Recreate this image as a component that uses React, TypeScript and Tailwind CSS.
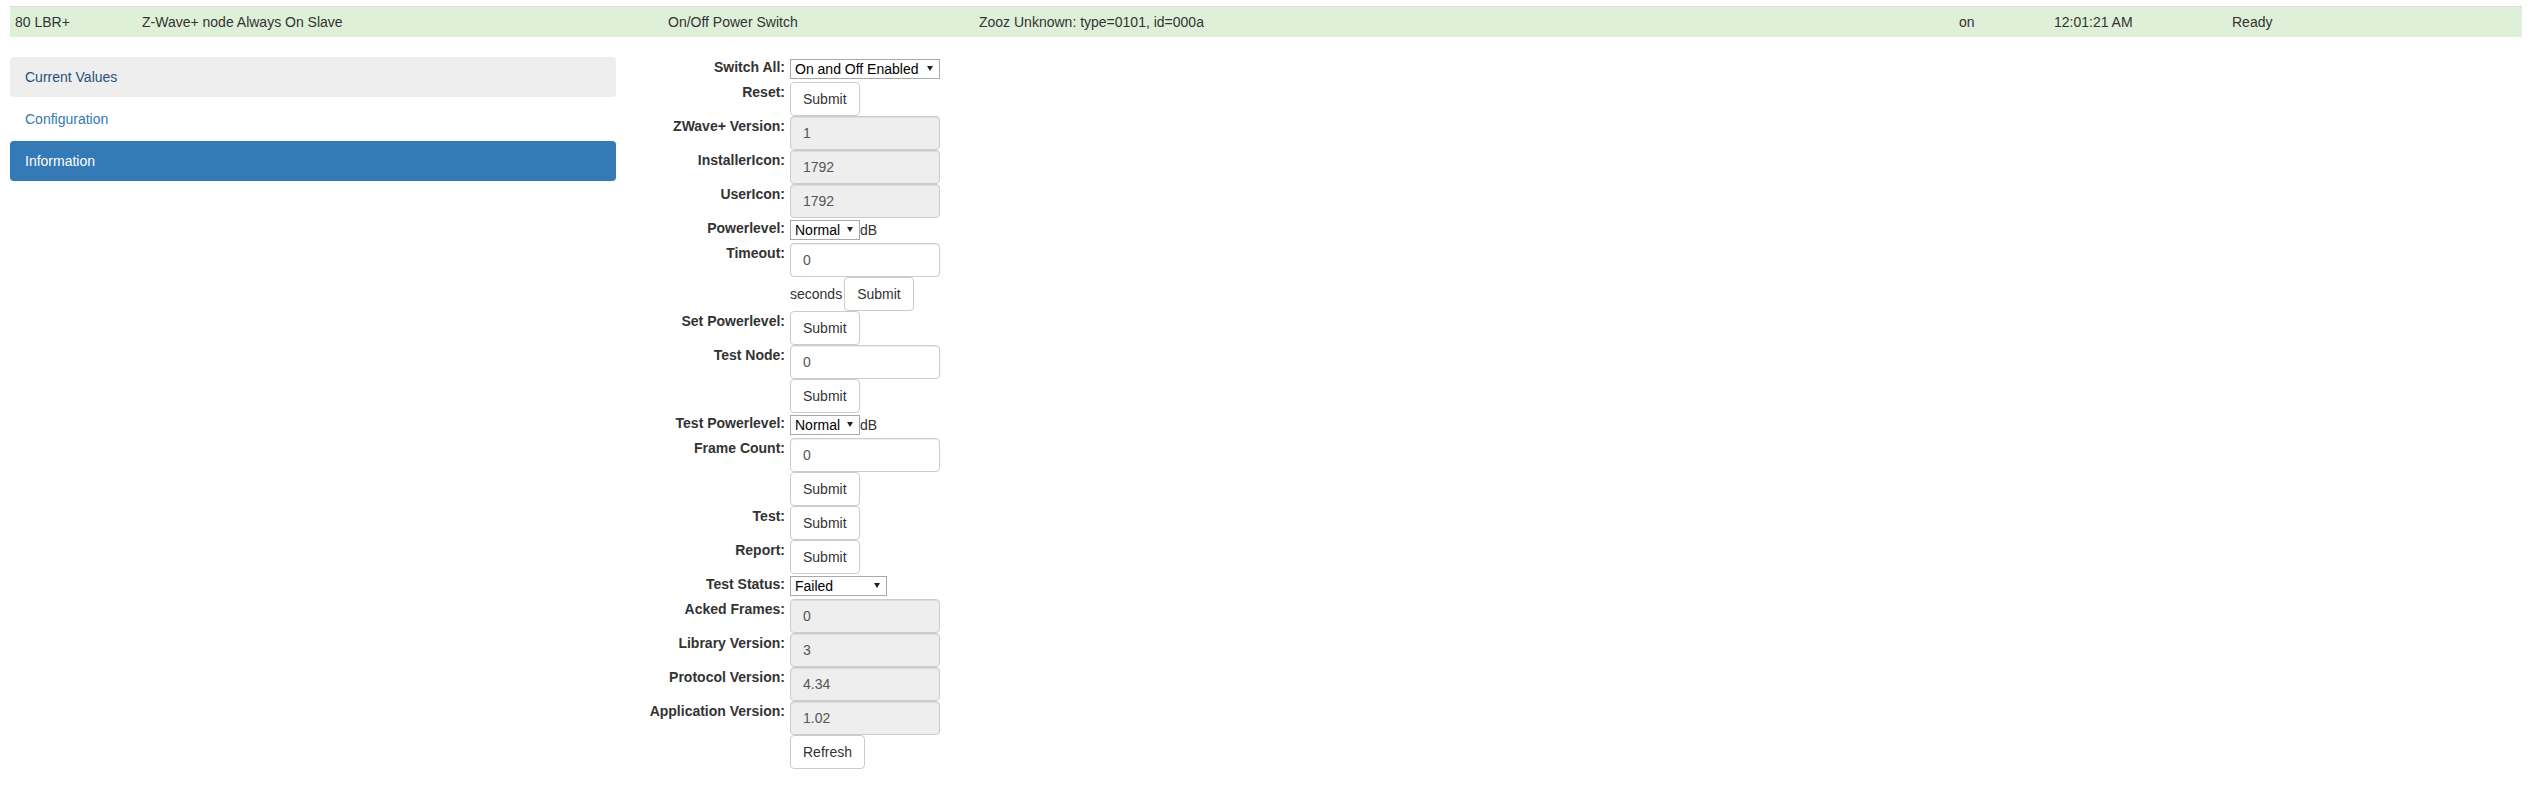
import React from "react";

function Label({ children }: { children?: React.ReactNode }) {
  return (
    <div className="w-[137px] shrink-0 text-right font-bold leading-[20px] text-[#333]">
      {children}
    </div>
  );
}

function SelectRow({
  label,
  value,
  widthClass,
  suffix,
}: {
  label: string;
  value: string;
  widthClass: string;
  suffix?: string;
}) {
  return (
    <div className="flex h-[25px]">
      <Label>{label}</Label>
      <div className="ml-[5px] flex items-start">
        <div
          className={
            "relative mt-[2px] h-[20px] border border-[#a9a9a9] bg-white " +
            widthClass
          }
        >
          <span className="block whitespace-nowrap pl-[4px] leading-[18px] text-black">
            {value}
          </span>
          <svg
            className="absolute right-[6px] top-[6px]"
            width="6"
            height="5"
            viewBox="0 0 6 5"
          >
            <path d="M0 0h6L3 5z" fill="#222" />
          </svg>
        </div>
        {suffix ? (
          <span className="mt-[2px] leading-[20px] text-[#333]">{suffix}</span>
        ) : null}
      </div>
    </div>
  );
}

function InputRow({
  label,
  value,
  disabled,
}: {
  label: string;
  value: string;
  disabled?: boolean;
}) {
  return (
    <div className="flex h-[34px]">
      <Label>{label}</Label>
      <input
        readOnly
        value={value}
        className={
          disabled
            ? "ml-[5px] h-[34px] w-[150px] rounded-[4px] border border-[#ccc] bg-[#eee] px-[12px] py-[6px] leading-[20px] text-[#555] shadow-[inset_0_1px_1px_rgba(0,0,0,0.075)] outline-none"
            : "ml-[5px] h-[34px] w-[150px] rounded-[4px] border border-[#ccc] bg-white px-[12px] py-[6px] leading-[20px] text-[#555] shadow-[inset_0_1px_1px_rgba(0,0,0,0.075)] outline-none"
        }
      />
    </div>
  );
}

function Btn({ children }: { children: React.ReactNode }) {
  return (
    <button className="h-[34px] rounded-[4px] border border-[#ccc] bg-white px-[12px] leading-[20px] text-[#333]">
      {children}
    </button>
  );
}

function ButtonRow({ label, text }: { label?: string; text: string }) {
  return (
    <div className="flex h-[34px]">
      <Label>{label}</Label>
      <div className="ml-[5px]">
        <Btn>{text}</Btn>
      </div>
    </div>
  );
}

export default function App() {
  return (
    <div className="min-h-screen bg-white px-[10px] pt-[6px] font-['Liberation_Sans',Arial,sans-serif] text-[14px] text-[#333]">
      {/* status bar */}
      <div className="flex h-[31px] border-t border-[#ddd] bg-[#dff0d8] leading-[20px]">
        <div className="w-[127px] shrink-0 px-[5px] py-[5px]">80 LBR+</div>
        <div className="w-[526px] shrink-0 px-[5px] py-[5px]">
          Z-Wave+ node Always On Slave
        </div>
        <div className="w-[311px] shrink-0 px-[5px] py-[5px]">
          On/Off Power Switch
        </div>
        <div className="w-[980px] shrink-0 px-[5px] py-[5px]">
          Zooz Unknown: type=0101, id=000a
        </div>
        <div className="w-[95px] shrink-0 px-[5px] py-[5px]">on</div>
        <div className="w-[178px] shrink-0 px-[5px] py-[5px]">12:01:21 AM</div>
        <div className="flex-1 px-[5px] py-[5px]">Ready</div>
      </div>

      <div className="mt-[20px] flex">
        {/* sidebar */}
        <div className="flex w-[606px] shrink-0 flex-col gap-[2px]">
          <div className="h-[40px] rounded-[4px] bg-[#eee] px-[15px] py-[10px] leading-[20px] text-[#23527c]">
            Current Values
          </div>
          <div className="h-[40px] rounded-[4px] px-[15px] py-[10px] leading-[20px] text-[#337ab7]">
            Configuration
          </div>
          <div className="h-[40px] rounded-[4px] bg-[#337ab7] px-[15px] py-[10px] leading-[20px] text-white">
            Information
          </div>
        </div>

        {/* form */}
        <div className="ml-[32px] flex flex-col">
          <SelectRow
            label="Switch All:"
            value="On and Off Enabled"
            widthClass="w-[150px]"
          />
          <ButtonRow label="Reset:" text="Submit" />
          <InputRow label="ZWave+ Version:" value="1" disabled />
          <InputRow label="InstallerIcon:" value="1792" disabled />
          <InputRow label="UserIcon:" value="1792" disabled />
          <SelectRow
            label="Powerlevel:"
            value="Normal"
            widthClass="w-[70px]"
            suffix="dB"
          />
          <InputRow label="Timeout:" value="0" />
          <div className="flex h-[34px]">
            <Label />
            <div className="ml-[5px] flex items-baseline">
              <span className="mr-[2px]">seconds</span>
              <Btn>Submit</Btn>
            </div>
          </div>
          <ButtonRow label="Set Powerlevel:" text="Submit" />
          <InputRow label="Test Node:" value="0" />
          <ButtonRow text="Submit" />
          <SelectRow
            label="Test Powerlevel:"
            value="Normal"
            widthClass="w-[70px]"
            suffix="dB"
          />
          <InputRow label="Frame Count:" value="0" />
          <ButtonRow text="Submit" />
          <ButtonRow label="Test:" text="Submit" />
          <ButtonRow label="Report:" text="Submit" />
          <SelectRow
            label="Test Status:"
            value="Failed"
            widthClass="w-[97px]"
          />
          <InputRow label="Acked Frames:" value="0" disabled />
          <InputRow label="Library Version:" value="3" disabled />
          <InputRow label="Protocol Version:" value="4.34" disabled />
          <InputRow label="Application Version:" value="1.02" disabled />
          <ButtonRow text="Refresh" />
        </div>
      </div>
    </div>
  );
}
